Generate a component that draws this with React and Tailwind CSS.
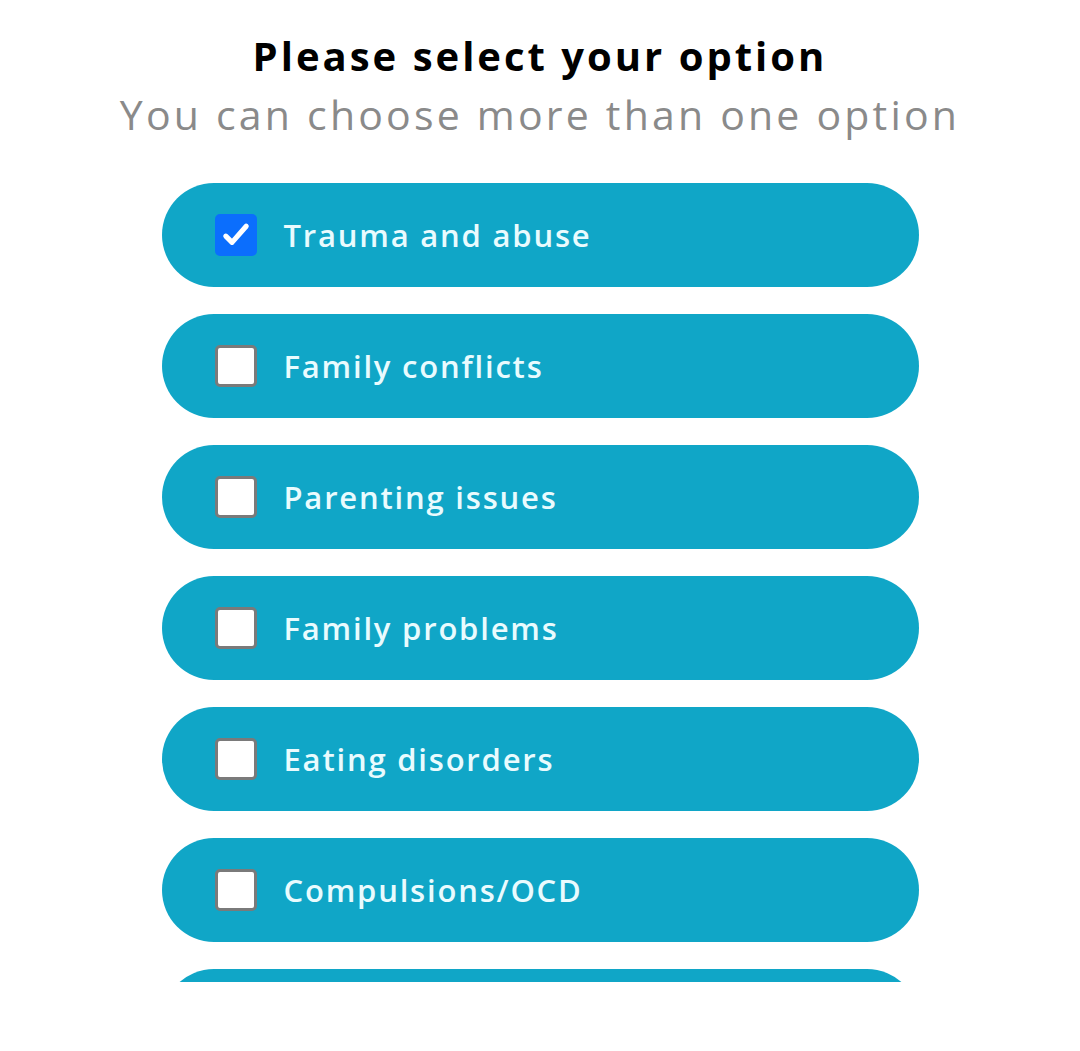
import { useState } from 'react';

const OPTIONS = [
  'Trauma and abuse',
  'Family conflicts',
  'Parenting issues',
  'Family problems',
  'Eating disorders',
  'Compulsions/OCD',
];

const Checkbox = ({ checked }) =>
  checked ? (
    <span className="flex h-[42px] w-[42px] shrink-0 items-center justify-center rounded-[5px] bg-[#0b6efd]">
      <svg width="34" height="34" viewBox="0 0 24 24" fill="none">
        <path d="M4.8 12.8l4.4 4.4L19.2 5.8" stroke="#fff" strokeWidth="3.6" strokeLinecap="round" strokeLinejoin="round" />
      </svg>
    </span>
  ) : (
    <span className="h-[42px] w-[42px] shrink-0 rounded-[5px] border-[3px] border-[#7a7a7a] bg-white" />
  );

const OptionPill = ({ label, checked, onToggle }) => (
  <button
    type="button"
    onClick={onToggle}
    className="flex h-[104px] w-full shrink-0 items-center gap-[27px] rounded-full bg-[#10a6c7] pl-[53px] text-left"
  >
    <Checkbox checked={checked} />
    <span className="text-[31px] font-semibold tracking-[1.8px] text-[#e9fbfe]">{label}</span>
  </button>
);

const App = () => {
  const [selected, setSelected] = useState(['Trauma and abuse']);

  const toggle = (label) =>
    setSelected((prev) => (prev.includes(label) ? prev.filter((x) => x !== label) : [...prev, label]));

  return (
    <div className="min-h-screen bg-white font-['Open_Sans','Noto_Sans',sans-serif]">
      <div className="flex flex-col items-center pt-[28px]">
        <h1 className="text-[40px] font-bold leading-[56px] tracking-[3px] text-black">Please select your option</h1>
        <p className="mt-[2px] text-[41px] font-normal leading-[56px] tracking-[3.2px] text-[#8a8a8a]">
          You can choose more than one option
        </p>
      </div>

      <div className="mx-auto mt-[41px] flex h-[799px] w-[757px] flex-col gap-[27px] overflow-hidden">
        {OPTIONS.map((label) => (
          <OptionPill key={label} label={label} checked={selected.includes(label)} onToggle={() => toggle(label)} />
        ))}
        <div className="h-[104px] w-full shrink-0 rounded-full bg-[#10a6c7]" />
      </div>
    </div>
  );
};

export default App;
